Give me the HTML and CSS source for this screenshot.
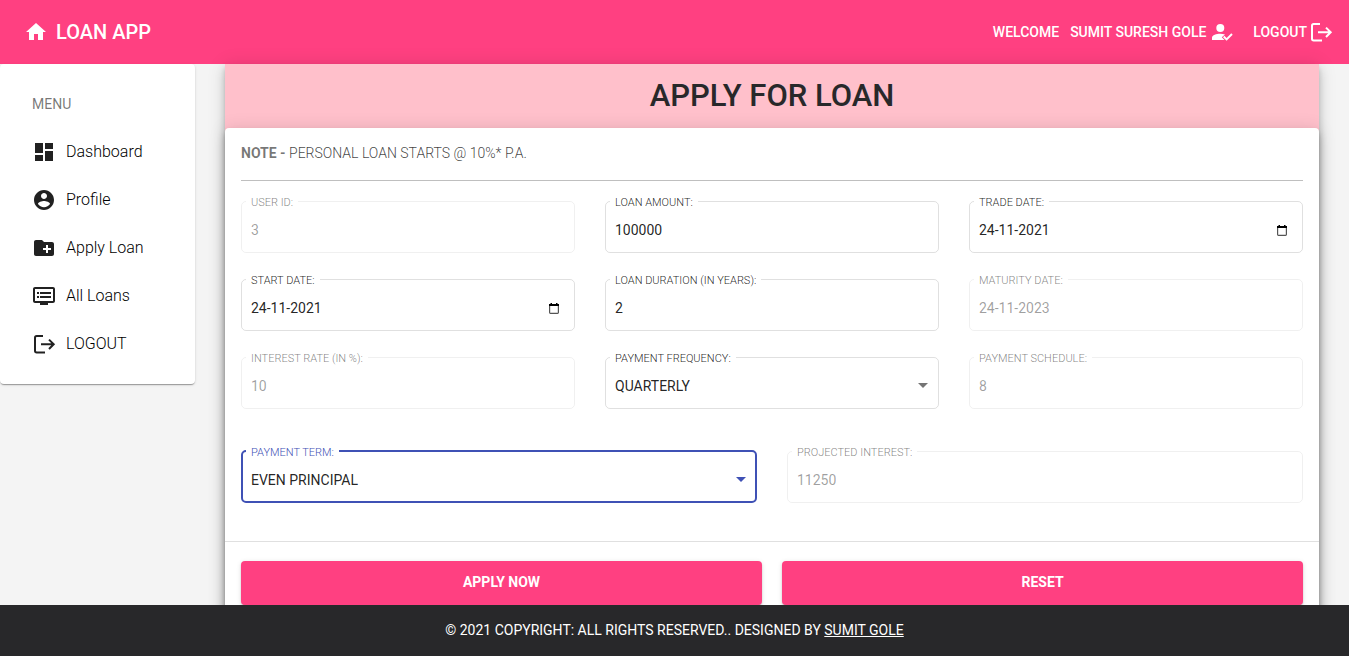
FILE: index.html
```html
<!DOCTYPE html>
<html lang="en">
<head>
<meta charset="utf-8">
<meta name="viewport" content="width=device-width, initial-scale=1">
<title>Loan App</title>
<link rel="stylesheet" href="styles.css">
</head>
<body>
<svg class="sprite" aria-hidden="true">
  <symbol id="i-logout" viewBox="0 0 24 24"><path d="M11 4H4.700Q3 4 3 5.700V18.800Q3 20.500 4.700 20.500H13" fill="none" stroke="currentColor" stroke-width="2"/><path d="M9 12.300H21.500M17 7.600L21.700 12.300L17 17" fill="none" stroke="currentColor" stroke-width="2"/></symbol>
  <symbol id="i-caret" viewBox="0 0 10 5"><path d="M0 0h10L5 5z" fill="currentColor"/></symbol>
  <symbol id="i-calendar" viewBox="0 0 10 11"><rect x=".6" y="1.600" width="8.800" height="8.800" rx=".8" fill="none" stroke="#555" stroke-width="1.200"/><path d="M0 1h1.500V0H3v1h4V0h1.500v1H10v2H0z" fill="#000"/></symbol>
</svg>
<div class="app">
  <header class="toolbar">
    <a class="brand" href="#">
      <svg class="icon" viewBox="0 0 24 24" fill="currentColor"><path d="M10 20v-6h4v6h5v-8h3L12 3 2 12h3v8z"/></svg>
      <span>LOAN APP</span>
    </a>
    <nav class="session">
      <span class="welcome">WELCOME</span>
      <a class="user" href="#">SUMIT SURESH GOLE
        <svg class="icon" viewBox="0 0 24 24" fill="currentColor"><circle cx="10.300" cy="8" r="4"/><path d="M2 20v-2.200C2 15 6.500 13.700 10.300 13.700c1.600 0 3.300.2 4.700.7L11.800 17.300 14.500 20z"/><path d="M13 17.200l1.400-1.400 2.200 2.200 4.700-4.700 1.400 1.400-6.100 6.100z"/></svg>
      </a>
      <a class="exit" href="#">LOGOUT <svg class="icon"><use href="#i-logout"/></svg></a>
    </nav>
  </header>

  <div class="body">
    <aside class="menu">
      <h2 class="menu-title">MENU</h2>
      <a class="menu-item" href="#"><svg class="icon" viewBox="0 0 24 24" fill="currentColor"><path d="M3 13h8V3H3v10zm0 8h8v-6H3v6zm10 0h8V11h-8v10zm0-18v6h8V3h-8z"/></svg>Dashboard</a>
      <a class="menu-item" href="#"><svg class="icon" viewBox="0 0 24 24" fill="currentColor"><path d="M12 2C6.480 2 2 6.480 2 12s4.480 10 10 10 10-4.480 10-10S17.520 2 12 2zm0 3c1.660 0 3 1.340 3 3s-1.340 3-3 3-3-1.340-3-3 1.340-3 3-3zm0 14.200c-2.500 0-4.710-1.280-6-3.220.03-1.990 4-3.080 6-3.080 1.990 0 5.970 1.090 6 3.080-1.290 1.940-3.500 3.220-6 3.220z"/></svg>Profile</a>
      <a class="menu-item" href="#"><svg class="icon" viewBox="0 0 24 24" fill="currentColor"><path d="M20 6h-8l-2-2H4c-1.110 0-1.990.89-1.990 2L2 18c0 1.110.89 2 2 2h16c1.110 0 2-.89 2-2V8c0-1.110-.89-2-2-2zm-1 8h-3v3h-2v-3h-3v-2h3V9h2v3h3v2z"/></svg>Apply Loan</a>
      <a class="menu-item" href="#"><svg class="icon" viewBox="0 0 24 24" fill="currentColor"><path d="M21 3H3c-1.100 0-2 .9-2 2v12c0 1.100.9 2 2 2h5v2h8v-2h5c1.100 0 1.990-.9 1.990-2L23 5c0-1.100-.9-2-2-2zm0 14H3V5h18v12zm-2-9H8v2h11V8zm0 4H8v2h11v-2zM7 8H5v2h2V8zm0 4H5v2h2v-2z"/></svg>All Loans</a>
      <a class="menu-item" href="#"><svg class="icon"><use href="#i-logout"/></svg>LOGOUT</a>
    </aside>

    <main class="panel">
      <h1 class="panel-title">APPLY FOR LOAN</h1>
      <form class="card">
        <p class="note"><strong>NOTE -</strong> PERSONAL LOAN STARTS @ 10%* P.A.</p>
        <div class="grid three">
          <fieldset class="field" disabled><legend><label for="uid">USER ID:</label></legend><input id="uid" value="3"></fieldset>
          <fieldset class="field"><legend><label for="amount">LOAN AMOUNT:</label></legend><input id="amount" value="100000"></fieldset>
          <fieldset class="field"><legend><label for="trade">TRADE DATE:</label></legend><input id="trade" value="24-11-2021"><button class="pick" type="button" aria-label="Pick trade date"><svg><use href="#i-calendar"/></svg></button></fieldset>
          <fieldset class="field"><legend><label for="start">START DATE:</label></legend><input id="start" value="24-11-2021"><button class="pick" type="button" aria-label="Pick start date"><svg><use href="#i-calendar"/></svg></button></fieldset>
          <fieldset class="field"><legend><label for="years">LOAN DURATION (IN YEARS):</label></legend><input id="years" value="2"></fieldset>
          <fieldset class="field" disabled><legend><label for="maturity">MATURITY DATE:</label></legend><input id="maturity" value="24-11-2023"></fieldset>
          <fieldset class="field" disabled><legend><label for="rate">INTEREST RATE (IN %):</label></legend><input id="rate" value="10"></fieldset>
          <fieldset class="field"><legend><label for="freq">PAYMENT FREQUENCY:</label></legend><select id="freq"><option>QUARTERLY</option></select><svg class="caret"><use href="#i-caret"/></svg></fieldset>
          <fieldset class="field" disabled><legend><label for="schedule">PAYMENT SCHEDULE:</label></legend><input id="schedule" value="8"></fieldset>
        </div>
        <div class="grid two">
          <fieldset class="field active"><legend><label for="term">PAYMENT TERM:</label></legend><select id="term"><option>EVEN PRINCIPAL</option></select><svg class="caret"><use href="#i-caret"/></svg></fieldset>
          <fieldset class="field" disabled><legend><label for="interest">PROJECTED INTEREST:</label></legend><input id="interest" value="11250"></fieldset>
        </div>
        <div class="actions">
          <button class="btn" type="button">APPLY NOW</button>
          <button class="btn" type="reset">RESET</button>
        </div>
      </form>
    </main>
  </div>

  <footer class="footer"><span>© 2021 COPYRIGHT: ALL RIGHTS RESERVED.. DESIGNED BY <a href="#">SUMIT GOLE</a></span></footer>
</div>
</body>
</html>
```
FILE: styles.css
```css
* { box-sizing: border-box; }
body { margin: 0; background: #fff; font: 400 14px/20px Roboto, "Liberation Sans", sans-serif; color: rgba(0,0,0,.87); }
a { color: inherit; text-decoration: none; }
.sprite { display: none; }
.icon { width: 24px; height: 24px; flex: none; }

.app { height: 100vh; margin-right: 1px; display: flex; flex-direction: column; background: #f4f4f4; overflow: hidden; }

.toolbar { flex: none; height: 64px; padding: 0 16px 0 24px; display: flex; align-items: center; justify-content: space-between; background: #ff4081; color: #fff; }
.brand { display: flex; align-items: center; gap: 8px; font-size: 20px; font-weight: 500; }
.session { display: flex; align-items: center; font-weight: 500; }
.user, .exit { display: flex; align-items: center; }
.user { gap: 4px; margin: 0 19px 0 11px; }
.exit { gap: 2px; }

.body { flex: 1; min-height: 0; display: flex; align-items: flex-start; gap: 30px; padding-right: 30px; }

.menu { flex: none; width: 195px; padding: 16px; background: #fff; border-radius: 4px; box-shadow: 0 2px 1px -1px rgba(0,0,0,.2), 0 1px 1px rgba(0,0,0,.14), 0 1px 3px rgba(0,0,0,.12); }
.menu-title { margin: 0; padding: 0 16px; font-size: 14px; line-height: 48px; font-weight: 400; color: rgba(0,0,0,.54); }
.menu-item { display: flex; align-items: center; gap: 10px; height: 48px; padding: 0 16px; font-size: 16px; font-weight: 300; color: #000; }
.menu-item .icon { color: rgba(0,0,0,.87); }

.panel { flex: 1; min-width: 0; background: #ffc0cb; box-shadow: 0 3px 5px -1px rgba(0,0,0,.2), 0 6px 10px rgba(0,0,0,.14), 0 1px 18px rgba(0,0,0,.12); }
.panel-title { margin: 0; height: 64px; font-size: 31px; line-height: 63px; font-weight: 500; text-align: center; color: #28282a; }

.card { padding: 15px 0 16px; background: #fff; border-radius: 4px; box-shadow: 0 3px 5px -1px rgba(0,0,0,.2), 0 6px 10px rgba(0,0,0,.14), 0 1px 18px rgba(0,0,0,.12); }
.note { margin: 0 16px 13px; padding-bottom: 17px; border-bottom: 1px solid rgba(0,0,0,.25); font-weight: 300; color: rgba(0,0,0,.75); }
.note strong { font-weight: 700; color: rgba(0,0,0,.54); }

.grid { display: grid; gap: 19px 30px; padding: 0 16px; }
.three { grid-template-columns: repeat(3, 1fr); }
.two { grid-template-columns: repeat(2, 1fr); margin-top: 35px; }

.field { position: relative; min-width: 0; height: 59px; margin: 0; padding: 0 9px 0 4px; display: flex; align-items: flex-start; border: 1px solid rgba(0,0,0,.12); border-radius: 5px; }
.field legend { padding: 3px 5px 0; font-size: 11px; line-height: 11px; font-weight: 300; color: rgba(0,0,0,.87); }
.field legend label { display: block; }
.field input, .field select { width: 100%; height: 20px; margin: 12px 0 0; padding: 0 5px; border: 0; outline: 0; background: none; appearance: none; font: inherit; color: inherit; opacity: 1; }
.field:disabled { border-color: rgba(0,0,0,.06); color: rgba(0,0,0,.38); }
.field:disabled legend { color: rgba(0,0,0,.5); }
.field.active { border: 2px solid #3f51b5; padding: 0 8px 0 3px; }
.field.active legend { color: #3f51b5; }
.caret { position: absolute; right: 10px; top: 19px; width: 10px; height: 5px; color: rgba(0,0,0,.54); pointer-events: none; }
.active .caret { right: 9px; color: #3f51b5; }
.pick { flex: none; width: 10px; height: 20px; margin: 12px 6px 0 0; padding: 0; border: 0; background: none; display: flex; align-items: center; }
.pick svg { width: 10px; height: 11px; }

.actions { display: grid; grid-template-columns: 1fr 1fr; gap: 20px; margin-top: 38px; padding: 19px 16px 0; border-top: 1px solid rgba(0,0,0,.12); }
.btn { height: 44px; padding: 0 0 2px; border: 0; border-radius: 4px; background: #ff4081; color: #fff; font: 700 14px/20px Roboto, sans-serif; box-shadow: 0 3px 1px -2px rgba(0,0,0,.2), 0 2px 2px rgba(0,0,0,.14), 0 1px 5px rgba(0,0,0,.12); }

.footer { position: relative; flex: none; height: 51px; padding-bottom: 2px; display: flex; align-items: center; justify-content: center; background: #28282a; color: #fff; }
.footer a { text-decoration: underline; }
```
